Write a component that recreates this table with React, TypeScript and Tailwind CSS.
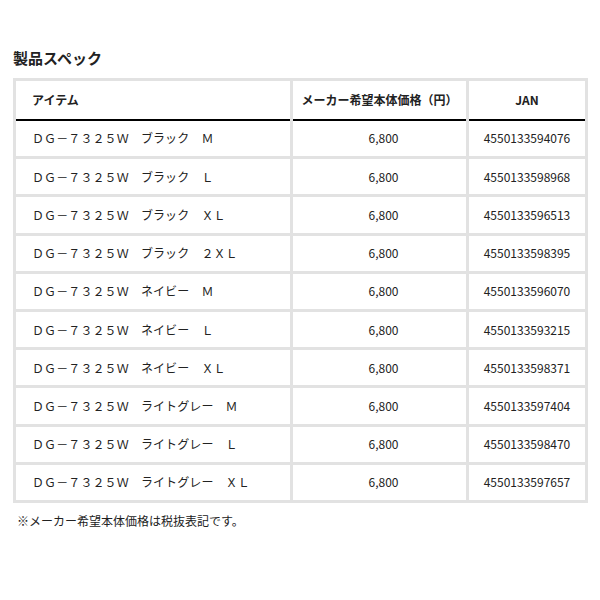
import React from 'react';

const rows: { name: string; jan: string }[] = [
  { name: 'ＤＧ－７３２５Ｗ　ブラック　Ｍ', jan: '4550133594076' },
  { name: 'ＤＧ－７３２５Ｗ　ブラック　Ｌ', jan: '4550133598968' },
  { name: 'ＤＧ－７３２５Ｗ　ブラック　ＸＬ', jan: '4550133596513' },
  { name: 'ＤＧ－７３２５Ｗ　ブラック　２ＸＬ', jan: '4550133598395' },
  { name: 'ＤＧ－７３２５Ｗ　ネイビー　Ｍ', jan: '4550133596070' },
  { name: 'ＤＧ－７３２５Ｗ　ネイビー　Ｌ', jan: '4550133593215' },
  { name: 'ＤＧ－７３２５Ｗ　ネイビー　ＸＬ', jan: '4550133598371' },
  { name: 'ＤＧ－７３２５Ｗ　ライトグレー　Ｍ', jan: '4550133597404' },
  { name: 'ＤＧ－７３２５Ｗ　ライトグレー　Ｌ', jan: '4550133598470' },
  { name: 'ＤＧ－７３２５Ｗ　ライトグレー　ＸＬ', jan: '4550133597657' },
];

export default function App() {
  return (
    <div className="w-[600px] h-[600px] bg-white px-[13px] pt-[47px] text-[#222] font-['Noto_Sans_CJK_JP','Noto_Sans',sans-serif]">
      <h2 className="text-[15px] leading-[22px] font-bold">製品スペック</h2>
      <table className="mt-[9px] w-[572px] border-collapse table-fixed text-[12px]">
        <colgroup>
          <col className="w-[277px]" />
          <col className="w-[176px]" />
          <col className="w-[119px]" />
        </colgroup>
        <thead>
          <tr className="h-[40px]">
            <th className="border-[3px] border-[#e2e2e2] border-b-2 border-b-black text-left font-bold pl-[16px]">アイテム</th>
            <th className="border-[3px] border-[#e2e2e2] border-b-2 border-b-black text-center font-bold">メーカー希望本体価格（円）</th>
            <th className="border-[3px] border-[#e2e2e2] border-b-2 border-b-black text-center font-bold">JAN</th>
          </tr>
        </thead>
        <tbody>
          {rows.map((r, i) => (
            <tr key={r.jan} className="h-[38.2px]">
              <td className={`border-[3px] border-[#e2e2e2] pl-[16px] tracking-[0.1px] ${i === 0 ? 'border-t-0' : ''}`}>{r.name}</td>
              <td className={`border-[3px] border-[#e2e2e2] text-center pl-[8px] ${i === 0 ? 'border-t-0' : ''}`}>6,800</td>
              <td className={`border-[3px] border-[#e2e2e2] text-center ${i === 0 ? 'border-t-0' : ''}`}>{r.jan}</td>
            </tr>
          ))}
        </tbody>
      </table>
      <p className="mt-[9px] pl-[4px] text-[12px] leading-[18px]">※メーカー希望本体価格は税抜表記です。</p>
    </div>
  );
}
